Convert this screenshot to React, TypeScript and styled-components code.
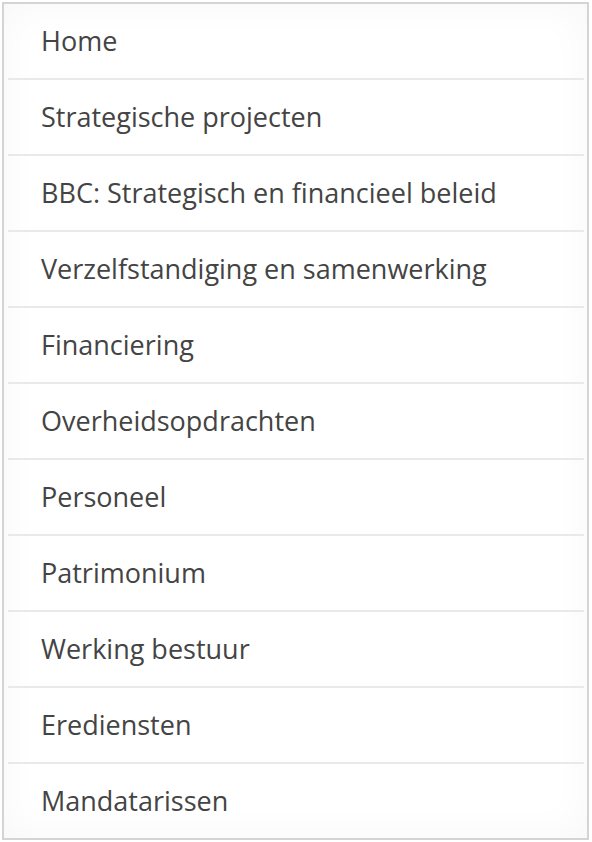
import React from 'react';
import styled, { createGlobalStyle } from 'styled-components';

const ITEMS = [
	'Home',
	'Strategische projecten',
	'BBC: Strategisch en financieel beleid',
	'Verzelfstandiging en samenwerking',
	'Financiering',
	'Overheidsopdrachten',
	'Personeel',
	'Patrimonium',
	'Werking bestuur',
	'Erediensten',
	'Mandatarissen',
];

const GlobalStyle = createGlobalStyle`
	body {
		margin: 0;
		background: #ffffff;
		font-family: 'Open Sans', 'Noto Sans', sans-serif;
	}
`;

const Panel = styled.nav`
	margin: 2px 0 0 2px;
	width: 587px;
	box-sizing: border-box;
	border: 2px solid #d4d4d4;
	background: #ffffff;
	box-shadow: inset 0 0 40px rgba(0, 0, 0, 0.035);
	padding: 0 3px 0 4px;
`;

const List = styled.ul`
	list-style: none;
	margin: 0;
	padding: 0;
`;

const Item = styled.li`
	height: 76px;
	display: flex;
	align-items: center;
	padding: 0 0 2px 33px;
	box-sizing: border-box;
	border-bottom: 2px solid #e9e9e9;

	&:last-child {
		border-bottom: none;
		height: 74px;
	}
`;

const Link = styled.a`
	font-size: 27px;
	font-weight: 380;
	color: #444444;
	text-decoration: none;
`;

const App = () => (
	<>
		<GlobalStyle />
		<Panel>
			<List>
				{ITEMS.map((label) => (
					<Item key={label}>
						<Link href="#">{label}</Link>
					</Item>
				))}
			</List>
		</Panel>
	</>
);

export default App;
